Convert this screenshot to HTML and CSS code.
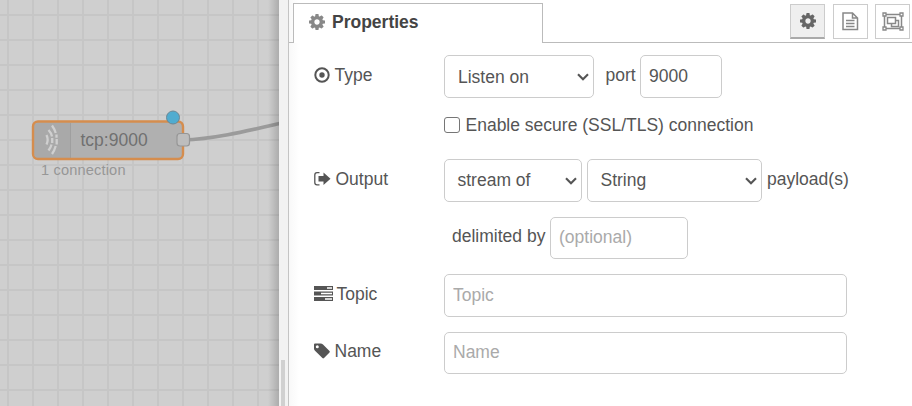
FILE: index.html
```
<!DOCTYPE html>
<html lang="en">
<head>
<meta charset="utf-8">
<title>Properties</title>
<link rel="stylesheet" href="styles.css">
</head>
<body>
<svg class="defs" width="0" height="0"><defs>
<symbol id="cog" viewBox="128 128 1536 1536"><path d="M1152 896q0-106-75-181t-181-75-181 75-75 181 75 181 181 75 181-75 75-181zm512-109v222q0 12-8 23t-20 13l-185 28q-19 54-39 91 35 50 107 138 10 12 10 25t-9 23q-27 37-99 108t-94 71q-12 0-26-9l-138-108q-44 23-91 38-16 136-29 186-7 28-36 28h-222q-14 0-24.500-8.500t-11.500-21.500l-28-184q-49-16-90-37l-141 107q-10 9-25 9-14 0-25-11-126-114-165-168-7-10-7-23 0-12 8-23 15-21 51-66.500t54-70.500q-27-50-41-99l-183-27q-13-2-21-12.500t-8-23.500v-222q0-12 8-23t19-13l186-28q14-46 39-92-40-57-107-138-10-12-10-24 0-10 9-23 26-36 98.500-107.500t94.500-71.500q13 0 26 10l138 107q44-23 91-38 16-136 29-186 7-28 36-28h222q14 0 24.500 8.500t11.500 21.500l28 184q49 16 90 37l142-107q9-9 24-9 13 0 25 10 129 119 165 170 7 8 7 22 0 12-8 23-15 21-51 66.500t-54 70.500q26 50 41 98l183 28q13 2 21 12.500t8 23.500z"/></symbol>
</defs></svg>
<div class="app">
  <div class="workspace">
    <svg class="canvas" width="279" height="406" viewBox="0 0 279 406">
      <defs>
        <pattern id="grid" x="7" y="14" width="25" height="25" patternUnits="userSpaceOnUse"><path class="grid-line" d="M0 0H25V2H0ZM0 2H2V25H0Z"/></pattern>
      </defs>
      <rect width="279" height="406" fill="url(#grid)"/>
      <path class="wire" d="M183 140C214 139 247 131 282 123"/>
      <rect class="node" x="33" y="121.500" width="150" height="37.500" rx="5"/>
      <path class="node-icon" d="M39 122.500H70V158H39Q34 158 34 153V127Q34 122.500 39 122.500Z"/>
      <path class="node-edge" d="M70.500 123V158"/>
      <rect class="node-border" x="33" y="121.500" width="150" height="37.500" rx="5"/>
      <g class="waves">
        <path d="M46.500 135Q48.800 139.800 46.500 144.500"/>
        <path d="M48.500 130Q51.300 133 52 136.500M52.200 138V143M51.500 144.500Q50.800 147.500 48.500 150.500"/>
        <path d="M52 125.500Q54.500 129 55.700 133M56.500 134.500V137.800M56.700 139V144.500M55.700 146Q54.500 150.500 52 154"/>
      </g>
      <text class="node-label" x="80.500" y="146">tcp:9000</text>
      <text class="node-status" x="41" y="175" textLength="84.500">1 connection</text>
      <rect class="port" x="177" y="133.500" width="12.500" height="12.500" rx="3"/>
      <circle class="changed" cx="173" cy="117.500" r="6.500"/>
    </svg>
  </div>
  <div class="separator"><div class="grip"></div></div>
  <main class="tray">
    <header class="tabs">
      <div class="tab-lead"></div>
      <div class="tab"><svg class="tab-icon"><use href="#cog"/></svg><span>Properties</span></div>
      <div class="tools">
        <button class="tool selected"><svg class="tool-cog"><use href="#cog"/></svg></button>
        <button class="tool"><svg width="17" height="19" viewBox="0 0 17 19"><path class="thin" d="M1 1H10.500L15.500 6V17.500H1ZM10.500 1V6H15.500M4 8.500H12.500M4 11.500H12.500M4 14.500H12.500"/></svg></button>
        <button class="tool"><svg width="22" height="19" viewBox="0 0 22 19"><path class="thin" d="M3 2.500H19M3 16.500H19M2.500 3V16M19.500 3V16M5.500 5.500H13.500V11.500H5.500ZM13.500 8.500H16.500V14.500H9.500V11.500"/><path class="handle" d="M1 1H4V4H1ZM18 1H21V4H18ZM1 15H4V18H1ZM18 15H21V18H18Z"/></svg></button>
      </div>
    </header>
    <form class="form">
      <div class="row">
        <label class="name"><svg width="16" height="16" viewBox="0 0 16 16"><circle class="ring" cx="8" cy="8" r="6.700"/><circle cx="8" cy="8" r="2.700"/></svg>Type</label>
        <div class="select mode">Listen on<svg class="chevron" viewBox="0 0 12 8"><path d="M1 1.200L6 6.200L11 1.200"/></svg></div>
        <span class="port-label">port</span><input class="port-field" value="9000">
      </div>
      <div class="row secure"><input type="checkbox" class="check"><span>Enable secure (SSL/TLS) connection</span></div>
      <div class="row output">
        <label class="name"><svg width="17" height="16" viewBox="0 0 17 16"><path class="exit" d="M5.500 1.700H3Q.8 1.700 .8 4V11.500Q.8 13.800 3 13.800H5.500"/><path d="M4.500 5H9.500V1.500L16.500 7.800L9.500 14V10.500H4.500Z"/></svg>Output</label>
        <div class="select stream">stream of<svg class="chevron" viewBox="0 0 12 8"><path d="M1 1.200L6 6.200L11 1.200"/></svg></div>
        <div class="select type">String<svg class="chevron" viewBox="0 0 12 8"><path d="M1 1.200L6 6.200L11 1.200"/></svg></div>
        <span class="payload">payload(s)</span>
      </div>
      <div class="row delimiter"><span>delimited by</span><input class="delimiter-field" placeholder="(optional)"></div>
      <div class="row topic">
        <label class="name wide"><svg width="19" height="15" viewBox="0 0 19 15"><path fill-rule="evenodd" d="M0 0H19V4H0ZM13 1.200V2.700H18V1.200ZM0 5.500H19V9.500H0ZM7 6.700V8.200H18V6.700ZM0 11H19V15H0ZM11 12.200V13.700H18V12.200Z"/></svg>Topic</label>
        <input class="full" placeholder="Topic">
      </div>
      <div class="row last">
        <label class="name"><svg width="16" height="16" viewBox="0 0 16 16"><path fill-rule="evenodd" d="M0 1.500Q0 .5 1 .5H6.500Q8 .5 9 1.500L15.500 8Q16.200 8.800 15.500 9.500L10 15Q9.200 15.800 8.400 15L1 7.700Q0 6.700 0 5.500ZM3.300 2.200A1.500 1.500 0 1 0 3.300 5.200A1.500 1.500 0 1 0 3.300 2.200Z"/></svg>Name</label>
        <input class="full" placeholder="Name">
      </div>
    </form>
  </main>
</div>
</body>
</html>
```
FILE: styles.css
```
* { box-sizing: border-box; }
body { margin: 0; font: 17.5px/25px "Liberation Sans", Arial, sans-serif; color: #555; background: #fff; overflow: hidden; }
.defs { position: absolute; }
.app { display: flex; height: 406px; }
.workspace { width: 279px; position: relative; background: #cfcfcf; }
.workspace::after { content: ""; position: absolute; inset: 0 0 0 auto; width: 11px; background: linear-gradient(to right, transparent, rgba(0,0,0,.17)); }
.canvas { display: block; }
.grid-line { fill: #c6c6c6; }
.wire { fill: none; stroke: #9b9b9b; stroke-width: 3.7; }
.node { fill: #b0b0b0; }
.node-icon { fill: #a9a9a9; }
.node-edge { stroke: #9f9f9f; }
.node-border { fill: none; stroke: #d58d4e; stroke-width: 2.4; }
.waves { fill: none; stroke: #d0d0d0; stroke-width: 2.3; }
.node-label { font-size: 17.5px; fill: #707070; }
.node-status { font-size: 14.6px; fill: #969696; }
.port { fill: #bdbdbd; stroke: #969696; stroke-width: 1.2; }
.changed { fill: #50acd0; stroke: #6b8795; stroke-width: 1; }
.separator { width: 10px; background: #f2f2f2; border-right: 1px solid #c4c4c4; padding: 360px 0 0 2px; }
.grip { width: 4px; height: 46px; background: #d0d0d0; }
.tray { flex: 1; background: linear-gradient(to right, #f8f8f8, #fff 10px); }
.tabs { display: flex; height: 43px; align-items: flex-end; }
.tab-lead { width: 4px; border-bottom: 1px solid #bbb; }
.tab { width: 250px; height: 40px; border: 1px solid #bbb; border-bottom: 0; background: #fff; padding: 6px 0 0 15px; display: flex; align-items: flex-start; color: #444; font-weight: bold; }
.tab-icon { width: 16px; height: 16px; margin: 4px 7px 0 0; fill: #888; }
.tools { flex: 1; height: 43px; border-bottom: 1px solid #bbb; display: grid; grid-template-columns: 35px 35px 35px; justify-content: end; column-gap: 7px; padding: 4px 2px 0 0; }
.tool { width: 35px; height: 35px; border: 1px solid #ccc; background: #fff; padding: 0; display: flex; align-items: center; justify-content: center; fill: #666; }
.tool.selected { background: #efefef; border-bottom: 2px solid #aaa; margin-left: -1px; }
.tool-cog { width: 16px; height: 16px; }
.thin { fill: none; stroke: #888; stroke-width: 1.5; }
.handle { fill: #fff; stroke: #888; stroke-width: 1.3; }
.form { padding: 12px 0 0 25px; }
.row { display: flex; height: 43px; margin-bottom: 15px; }
.name { width: 130px; display: flex; align-items: flex-start; padding-top: 8px; fill: #555; }
.name svg { margin: 4px 4.500px 0 0; }
.name.wide svg { margin-right: 3.500px; }
.last .name { padding-top: 7px; }
.ring { fill: none; stroke: #555; stroke-width: 2; }
.exit { fill: none; stroke: #555; stroke-width: 1.3; }
.select, input:not(.check) { font: inherit; color: #555; height: 43px; border: 1px solid #ccc; border-radius: 5px; background: #fff; outline: 0; }
.select { display: flex; align-items: center; justify-content: space-between; padding: 1px 4px 0 13px; }
.output .select { padding-top: 0; padding-left: 12.500px; }
.chevron { width: 12px; height: 8px; fill: none; stroke: #555; stroke-width: 2.1; }
input:not(.check) { padding: 0 8px 1px; }
input::placeholder { color: #aaa; opacity: 1; }
.mode { width: 150px; }
.port-label { padding: 8px 4px 0 11.500px; width: 46px; }
.port-field { width: 82px; }
.row.secure { height: 25px; margin-bottom: 21px; padding-left: 130px; }
.check { width: 16px; height: 16px; margin: 4px 5.500px 0 0; appearance: none; border: 1px solid #767676; border-radius: 3px; background: #fff; }
.row.output { margin-bottom: 15px; }
.stream { width: 138px; margin-right: 5px; }
.type { width: 175px; }
.payload { padding: 8px 0 0 5px; }
.row.delimiter { height: 42px; padding-left: 138px; }
.delimiter span { width: 98px; padding-top: 7px; white-space: nowrap; }
.delimiter input.delimiter-field { width: 138px; height: 42px; }
.row .full { width: 403px; }
.last input.full:not(.check) { height: 42px; }
```
